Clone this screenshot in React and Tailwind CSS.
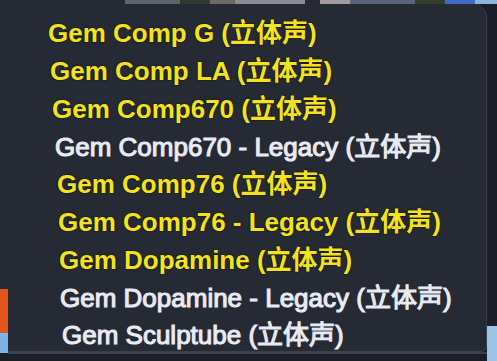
const plugins = [
  { name: 'Gem Comp G (立体声)', on: true, pl: 'pl-[40px]' },
  { name: 'Gem Comp LA (立体声)', on: true, pl: 'pl-[42px]' },
  { name: 'Gem Comp670 (立体声)', on: true, pl: 'pl-[44px]' },
  { name: 'Gem Comp670 - Legacy (立体声)', on: false, pl: 'pl-[47px]' },
  { name: 'Gem Comp76 (立体声)', on: true, pl: 'pl-[49px]' },
  { name: 'Gem Comp76 - Legacy (立体声)', on: true, pl: 'pl-[50px]' },
  { name: 'Gem Dopamine (立体声)', on: true, pl: 'pl-[51px]' },
  { name: 'Gem Dopamine - Legacy (立体声)', on: false, pl: 'pl-[52px]' },
  { name: 'Gem Sculptube (立体声)', on: false, pl: 'pl-[54px]' },
];

export default function App() {
  return (
    <div
      className="w-[497px] h-[361px] overflow-hidden bg-[#1b1e26] flex flex-col"
      style={{ fontFamily: '"Liberation Sans", "Noto Sans CJK SC", sans-serif' }}
    >
      {/* strip of whatever is behind the menu */}
      <div className="h-[4px] flex shrink-0">
        <div className="w-[125px] bg-[#262a33]" />
        <div className="w-[55px] bg-[#5e636c]" />
        <div className="w-[30px] bg-[#2f3a30]" />
        <div className="w-[25px] bg-[#6d6a64]" />
        <div className="w-[70px] bg-[#8a8c94]" />
        <div className="w-[15px] bg-[#262a33]" />
        <div className="w-[30px] bg-[#a49a9e]" />
        <div className="w-[65px] bg-[#55657e]" />
        <div className="w-[30px] bg-[#30402c]" />
        <div className="w-[30px] bg-[#3e6cc0]" />
        <div className="flex-1 bg-[#8eb2e0]" />
      </div>

      <div className="flex flex-1">
        <div className="w-[8px] flex flex-col">
          <div className="h-[285px] bg-[#262a33]" />
          <div className="h-[44px] bg-[#e0561c]" />
          <div className="h-[20px] bg-[#7fb4e6]" />
          <div className="flex-1 bg-[#1b1e26]" />
        </div>

        <div className="flex flex-col w-[479px]">
          <div className="h-[348px] bg-[#262a34] rounded-tr-[14px] rounded-br-[6px] border-r border-b border-[#3a3f4a] pt-[11px]">
            {plugins.map((p) => (
              <div
                key={p.name}
                className={`h-[37.75px] flex items-center whitespace-nowrap text-[26px] ${p.pl} ${
                  p.on
                    ? 'font-bold text-[#f3e31e] [text-shadow:0_0_2px_#14140a,0_0_1px_#000]'
                    : 'font-normal text-[#e9ebf4] [-webkit-text-stroke:1.1px_#e9ebf4]'
                }`}
              >
                {p.name}
              </div>
            ))}
          </div>
          <div className="h-[2px] bg-[#3c4350]" />
        </div>

        <div className="flex-1 flex flex-col">
          <div className="h-[322px]" />
          <div className="flex-1 bg-[#9cc4e8]" />
        </div>
      </div>
    </div>
  );
}
